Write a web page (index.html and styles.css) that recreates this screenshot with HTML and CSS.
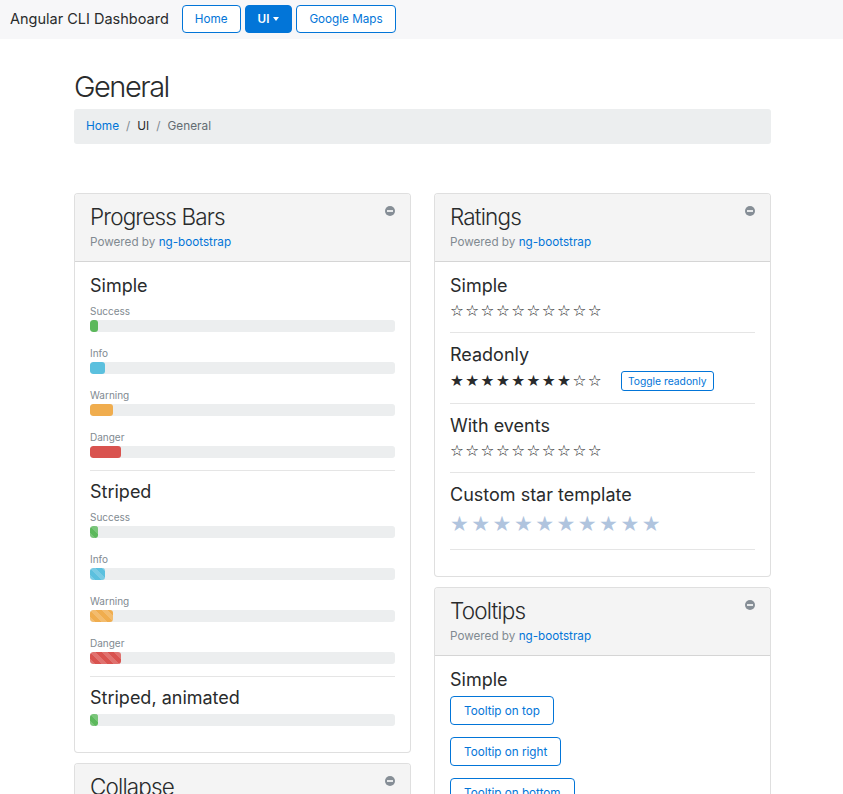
FILE: index.html
```html
<!DOCTYPE html>
<html lang="en">
<head>
<meta charset="utf-8">
<title>Angular CLI Dashboard</title>
<link rel="stylesheet" href="styles.css">
</head>
<body>
<nav class="navbar">
  <span class="brand">Angular CLI Dashboard</span>
  <div class="nav-btns">
    <a class="btn btn-outline" href="#">Home</a>
    <a class="btn btn-primary" href="#">UI<span class="caret"></span></a>
    <a class="btn btn-outline" href="#">Google Maps</a>
  </div>
</nav>

<main class="container">
  <h1 class="page-title">General</h1>
  <ol class="breadcrumb">
    <li><a href="#">Home</a></li>
    <li class="sep-item">/</li>
    <li>UI</li>
    <li class="sep-item">/</li>
    <li class="active">General</li>
  </ol>

  <div class="columns">
    <div class="col">
      <section class="card">
        <header class="card-header">
          <h3 class="card-title">Progress Bars</h3>
          <div class="card-sub">Powered by <a href="#">ng-bootstrap</a></div>
          <svg class="card-tool" viewBox="0 0 10 10"><circle cx="5" cy="5" r="5" fill="#868e96"/><rect x="2" y="4.2" width="6" height="1.6" fill="#fff"/></svg>
        </header>
        <div class="card-body">
          <h4 class="section-title">Simple</h4>
          <div class="prog-label">Success</div>
          <div class="progress"><div class="bar success" style="width:2.5%"></div></div>
          <div class="prog-label">Info</div>
          <div class="progress"><div class="bar info" style="width:5%"></div></div>
          <div class="prog-label">Warning</div>
          <div class="progress"><div class="bar warning" style="width:7.5%"></div></div>
          <div class="prog-label">Danger</div>
          <div class="progress"><div class="bar danger" style="width:10%"></div></div>
          <hr class="sep">
          <h4 class="section-title">Striped</h4>
          <div class="prog-label">Success</div>
          <div class="progress"><div class="bar success striped" style="width:2.5%"></div></div>
          <div class="prog-label">Info</div>
          <div class="progress"><div class="bar info striped" style="width:5%"></div></div>
          <div class="prog-label">Warning</div>
          <div class="progress"><div class="bar warning striped" style="width:7.5%"></div></div>
          <div class="prog-label">Danger</div>
          <div class="progress"><div class="bar danger striped" style="width:10%"></div></div>
          <hr class="sep">
          <h4 class="section-title">Striped, animated</h4>
          <div class="progress"><div class="bar success striped" style="width:2.5%"></div></div>
        </div>
      </section>

      <section class="card">
        <header class="card-header">
          <h3 class="card-title">Collapse</h3>
          <div class="card-sub">Powered by <a href="#">ng-bootstrap</a></div>
          <svg class="card-tool" viewBox="0 0 10 10"><circle cx="5" cy="5" r="5" fill="#868e96"/><rect x="2" y="4.2" width="6" height="1.6" fill="#fff"/></svg>
        </header>
        <div class="card-body">
          <h4 class="section-title">Simple</h4>
          <a class="btn btn-outline tip-btn" href="#">Toggle</a>
        </div>
      </section>
    </div>

    <div class="col">
      <section class="card">
        <header class="card-header">
          <h3 class="card-title">Ratings</h3>
          <div class="card-sub">Powered by <a href="#">ng-bootstrap</a></div>
          <svg class="card-tool" viewBox="0 0 10 10"><circle cx="5" cy="5" r="5" fill="#868e96"/><rect x="2" y="4.2" width="6" height="1.6" fill="#fff"/></svg>
        </header>
        <div class="card-body">
          <div class="rsec">
            <h4 class="section-title">Simple</h4>
            <div class="stars"><span class="star">☆</span><span class="star">☆</span><span class="star">☆</span><span class="star">☆</span><span class="star">☆</span><span class="star">☆</span><span class="star">☆</span><span class="star">☆</span><span class="star">☆</span><span class="star">☆</span></div>
          </div>
          <div class="rsec">
            <h4 class="section-title">Readonly</h4>
            <div class="stars-row">
              <div class="stars"><span class="star">★</span><span class="star">★</span><span class="star">★</span><span class="star">★</span><span class="star">★</span><span class="star">★</span><span class="star">★</span><span class="star">★</span><span class="star">☆</span><span class="star">☆</span></div>
              <a class="btn btn-outline btn-sm" href="#">Toggle readonly</a>
            </div>
          </div>
          <div class="rsec">
            <h4 class="section-title">With events</h4>
            <div class="stars"><span class="star">☆</span><span class="star">☆</span><span class="star">☆</span><span class="star">☆</span><span class="star">☆</span><span class="star">☆</span><span class="star">☆</span><span class="star">☆</span><span class="star">☆</span><span class="star">☆</span></div>
          </div>
          <div class="rsec">
            <h4 class="section-title">Custom star template</h4>
            <div class="stars custom"><span class="star">★</span><span class="star">★</span><span class="star">★</span><span class="star">★</span><span class="star">★</span><span class="star">★</span><span class="star">★</span><span class="star">★</span><span class="star">★</span><span class="star">★</span></div>
          </div>
        </div>
      </section>

      <section class="card">
        <header class="card-header">
          <h3 class="card-title">Tooltips</h3>
          <div class="card-sub">Powered by <a href="#">ng-bootstrap</a></div>
          <svg class="card-tool" viewBox="0 0 10 10"><circle cx="5" cy="5" r="5" fill="#868e96"/><rect x="2" y="4.2" width="6" height="1.6" fill="#fff"/></svg>
        </header>
        <div class="card-body">
          <h4 class="section-title">Simple</h4>
          <div class="tip-list">
            <a class="btn btn-outline tip-btn" href="#">Tooltip on top</a>
            <a class="btn btn-outline tip-btn" href="#">Tooltip on right</a>
            <a class="btn btn-outline tip-btn" href="#">Tooltip on bottom</a>
            <a class="btn btn-outline tip-btn" href="#">Tooltip on left</a>
          </div>
        </div>
      </section>
    </div>
  </div>
</main>
</body>
</html>
```

FILE: styles.css
```css
* { box-sizing: border-box; }

body {
  margin: 0;
  font-family: Inter, "Noto Sans", sans-serif;
  color: #292b2c;
  font-size: 14px;
  background: #fff;
}

a { color: #0275d8; text-decoration: none; }

.navbar {
  display: flex;
  align-items: center;
  height: 39px;
  padding: 0 9px 2px 10px;
  background: #f7f7f9;
}

.brand {
  font-size: 14.5px;
  color: #292b2c;
  margin-right: 13px;
}

.nav-btns {
  display: flex;
  gap: 4px;
}

.btn {
  display: inline-flex;
  align-items: center;
  height: 28px;
  padding: 0 12px;
  border: 1px solid #0275d8;
  border-radius: 4px;
  font-size: 11.7px;
  color: #0275d8;
  background: #fff;
  white-space: nowrap;
}

.btn-primary {
  background: #0275d8;
  color: #fff;
  font-weight: 600;
  padding: 0 12px;
}

.caret {
  display: inline-block;
  width: 0;
  height: 0;
  margin-left: 4px;
  border-top: 4px solid #fff;
  border-left: 3.5px solid transparent;
  border-right: 3.5px solid transparent;
}

.container {
  width: 697px;
  margin-left: 74px;
}

.page-title {
  font-size: 29px;
  font-weight: 300;
  line-height: 35px;
  margin: 30px 0 5px;
  letter-spacing: -1.5px;
}

.breadcrumb {
  list-style: none;
  display: flex;
  margin: 0;
  padding: 9px 12px;
  background: #eceeef;
  border-radius: 3px;
  font-size: 11.8px;
  line-height: 17px;
}

.breadcrumb .sep-item {
  color: #818a91;
  margin: 0 7px;
}

.breadcrumb .active { color: #636c72; }

.columns {
  display: flex;
  gap: 23px;
  margin-top: 49px;
  align-items: flex-start;
}

.col {
  width: 337px;
  display: flex;
  flex-direction: column;
  gap: 10px;
}

.card {
  border: 1px solid rgba(0, 0, 0, 0.125);
  border-radius: 4px;
  background: #fff;
}

.card-header {
  position: relative;
  padding: 10px 15px;
  background: #f4f4f4;
  border-bottom: 1px solid rgba(0, 0, 0, 0.125);
  border-radius: 3px 3px 0 0;
}

.card-title {
  font-size: 22.5px;
  font-weight: 300;
  line-height: 26px;
  margin: 0;
  letter-spacing: -0.85px;
}

.card-sub {
  font-size: 11.7px;
  line-height: 18px;
  margin-top: 3px;
  color: #818a91;
}

.card-tool {
  position: absolute;
  top: 12px;
  right: 15px;
  width: 10px;
  height: 10px;
}

.card-body {
  padding: 14px 15px;
}

.section-title {
  font-size: 18px;
  font-weight: 400;
  line-height: 20px;
  margin: 0 0 6px;
}

.sep {
  border: 0;
  border-top: 1px solid rgba(0, 0, 0, 0.1);
  margin: 0 0 11px;
}

.prog-label {
  font-size: 10px;
  line-height: 18px;
  color: #818a91;
}

.progress {
  height: 12px;
  background: #eceeef;
  border-radius: 3px;
  overflow: hidden;
  margin-bottom: 12px;
}

.bar {
  height: 100%;
  border-radius: 3px;
}

.bar.success { background-color: #5cb85c; }
.bar.info { background-color: #5bc0de; }
.bar.warning { background-color: #f0ad4e; }
.bar.danger { background-color: #d9534f; }

.bar.striped {
  background-image: linear-gradient(45deg, rgba(255,255,255,.18) 25%, transparent 25%, transparent 50%, rgba(255,255,255,.18) 50%, rgba(255,255,255,.18) 75%, transparent 75%, transparent);
  background-size: 12px 12px;
}

.rsec {
  padding-bottom: 12px;
  border-bottom: 1px solid rgba(0, 0, 0, 0.1);
  margin-bottom: 12px;
}

.stars {
  display: flex;
  line-height: 18px;
  height: 18px;
  align-items: center;
}

.star {
  display: inline-block;
  width: 15.3px;
  font-family: "DejaVu Sans", sans-serif;
  font-size: 15.5px;
  color: #292b2c;
}

.stars.custom {
  height: 26px;
  line-height: 26px;
}

.stars.custom .star {
  width: 21.3px;
  font-size: 21px;
  color: #b0c4de;
}

.stars-row {
  display: flex;
  align-items: center;
  gap: 18px;
}

.btn-sm {
  height: 20px;
  padding: 0 6px;
  font-size: 10.3px;
  border-radius: 3px;
}

.tip-list {
  display: flex;
  flex-direction: column;
  align-items: flex-start;
  gap: 12px;
}

.tip-btn {
  height: 29px;
  padding: 0 13px;
  font-size: 11.7px;
}
```
